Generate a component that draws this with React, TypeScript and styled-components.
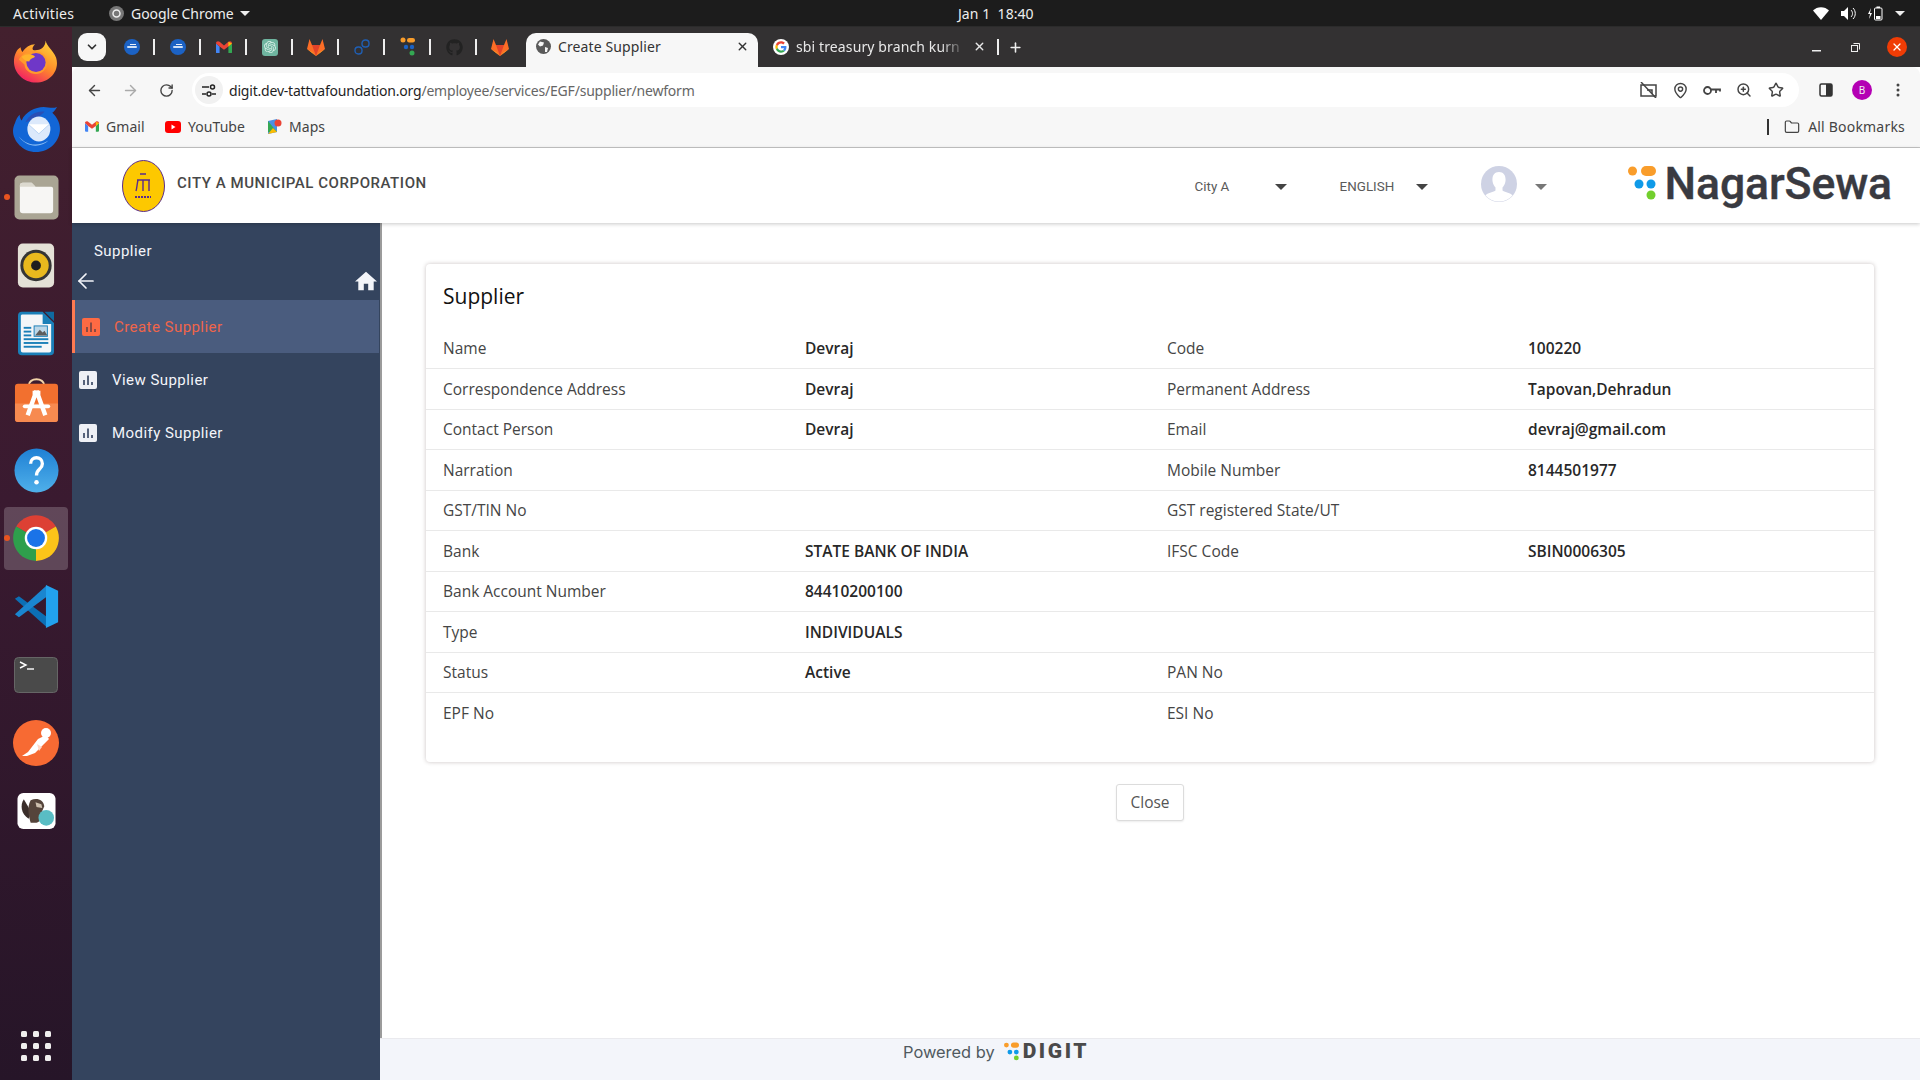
import React from 'react';
import styled, { createGlobalStyle } from 'styled-components';
import { ArrowLeft, ArrowRight, RotateCw, Star, ZoomIn, MapPin, Folder, Plus, X, ChevronDown } from 'lucide-react';
import { FaGithub } from 'react-icons/fa';
import { SiOpenai } from 'react-icons/si';

const Global = createGlobalStyle`
  html, body { margin: 0; padding: 0; background: #fff; }
  * { box-sizing: border-box; }
  #root { width: 1920px; height: 1080px; overflow: hidden; }
`;

const Screen = styled.div`
  width: 1920px; height: 1080px; display: flex; flex-direction: column; overflow: hidden;
  font-family: "Open Sans", sans-serif;
`;
const TopBar = styled.div`
  height: 27px; flex: none; background: #1c1c1c; color: #eee; display: flex; align-items: center;
  font-family: "Noto Sans", sans-serif; font-size: 14px; padding-left: 13px; border-bottom: 1px solid #2b2b2b;
`;
const TopLeft = styled.div`width: 945px; display: flex; align-items: center;`;
const Activities = styled.span`width: 96px; letter-spacing: 0.3px;`;
const AppName = styled.span`margin-left: 7px; letter-spacing: -0.05px;`;
const Caret = styled.span<{ $c?: string; $w?: number }>`
  display: inline-block; width: 0; height: 0; border-style: solid; border-color: ${p => p.$c || '#eee'} transparent transparent;
  border-width: ${p => (p.$w || 5) * 1}px ${p => p.$w || 5}px 0; flex: none;
`;
const Clock = styled.span`white-space: pre; letter-spacing: 0.05px;`;
const Tray = styled.div`margin-left: auto; display: flex; align-items: center; gap: 12px; padding-right: 15px;`;

const Desk = styled.div`flex: 1; min-height: 0; display: flex;`;
const Dock = styled.div`
  width: 72px; flex: none; display: flex; flex-direction: column; padding: 0 0 19px;
  background: linear-gradient(180deg, #43202e 0%, #3a1a30 45%, #261528 100%);
`;
const DockSlot = styled.div<{ $active?: boolean }>`
  height: 68.2px; flex: none; display: flex; align-items: center; justify-content: center; position: relative;
  &::before {
    content: ${p => (p.$active ? '""' : 'none')}; position: absolute; inset: 3px 4px 3px 4px; border-radius: 4px; background: rgba(255,255,255,.2);
  }
  svg { position: relative; }
`;
const RunDot = styled.i`position: absolute; left: 4px; top: 50%; width: 6px; height: 6px; margin-top: -3px; border-radius: 50%; background: #e95420; z-index: 1;`;
const AppsGrid = styled.div`
  margin-top: auto; align-self: center; display: grid; grid-template-columns: repeat(3, 6px); grid-auto-rows: 6px; gap: 6px;
`;
const AppsDot = styled.i`background: #f0eeee; border-radius: 1.5px;`;

const Browser = styled.div`flex: 1; min-width: 0; display: flex; flex-direction: column;`;
const TabStrip = styled.div`
  height: 40px; flex: none; background: #333132; display: flex; align-items: flex-end; padding-left: 6px; color: #e8e8e8;
  font-family: "Noto Sans", sans-serif; font-size: 14px;
`;
const TabMenu = styled.div`
  width: 28px; height: 28px; margin: 0 3px 6px 0; border-radius: 9px; background: #f7f7f7; color: #333; display: flex; align-items: center; justify-content: center;
`;
const PinTab = styled.div<{ $sep?: boolean }>`
  width: 46px; height: 34px; display: flex; align-items: center; justify-content: center; position: relative; padding-bottom: 6px;
  &::after { content: ${p => (p.$sep ? '""' : 'none')}; position: absolute; right: 0; top: 6px; width: 2px; height: 16px; background: #eee; }
`;
const OpenAiChip = styled.div`
  width: 16px; height: 17px; border-radius: 3px; background: #6fb5a0; color: #d8efe7; display: flex; align-items: center; justify-content: center;
`;
const ActiveTab = styled.div`
  width: 232px; height: 34px; margin-left: 3px; background: #f7f7f7; color: #333; border-radius: 10px 10px 0 0;
  display: flex; align-items: center; padding: 0 9px 7px 10px; position: relative;
`;
const TabTitle = styled.span<{ $fade?: boolean }>`
  margin-left: 7px; flex: 1; white-space: nowrap; letter-spacing: 0.12px;
  ${p => p.$fade ? 'mask-image: linear-gradient(90deg, #000 85%, transparent 100%);' : ''}
`;
const BackTab = styled.div`
  width: 241px; height: 34px; display: flex; align-items: center; padding: 0 10px 7px 15px; position: relative;
  &::after { content: ""; position: absolute; right: 0; top: 6px; width: 2px; height: 16px; background: #eee; }
`;
const NewTab = styled.div`margin-left: 9px; height: 34px; display: flex; align-items: center; padding-bottom: 6px; color: #eee;`;
const WinControls = styled.div`margin-left: auto; height: 40px; display: flex; align-items: center; padding-right: 13px; color: #eee;`;
const WinBtn = styled.div`width: 39px; display: flex; justify-content: center; align-items: center;`;
const WinClose = styled.div`width: 20px; height: 20px; margin-left: 12px; border-radius: 50%; background: #f03c05; color: #fff; display: flex; justify-content: center; align-items: center;`;

const Toolbar = styled.div`
  height: 40px; flex: none; background: #f7f7f7; display: flex; padding: 6px 4px 0; color: #444; border-radius: 8px 8px 0 0;
`;
const ToolBtn = styled.div<{ $dim?: boolean; $gap?: number }>`
  width: 36px; height: 34px; display: flex; align-items: center; justify-content: center; flex: none;
  color: ${p => (p.$dim ? '#aaa' : '#444')}; margin-left: ${p => p.$gap || 0}px;
`;
const Omnibox = styled.div`
  width: 1607px; height: 34px; margin-left: 8px; background: #fff; border-radius: 17px; display: flex; align-items: center; padding: 0 7px 0 3px; flex: none;
`;
const SiteChip = styled.div`width: 28px; height: 28px; border-radius: 50%; background: #f1f1f1; display: flex; align-items: center; justify-content: center;`;
const Url = styled.div`margin-left: 6px; font-family: "Noto Sans", sans-serif; font-size: 14px; color: #666; letter-spacing: -0.2px; white-space: nowrap;`;
const UrlHost = styled.span`color: #1f1f1f;`;
const OmniIcons = styled.div`margin-left: auto; display: flex;`;
const OmniIcon = styled.div`width: 32px; display: flex; justify-content: center; align-items: center; color: #444;`;
const Avatar = styled.div`width: 20px; height: 20px; border-radius: 50%; background: #b400b4; color: #f0f0f0; font: 10px "Noto Sans", sans-serif; display: flex; align-items: center; justify-content: center;`;

const Bookmarks = styled.div`
  height: 41px; flex: none; background: #f7f7f7; border-bottom: 1px solid #c6c6c6; display: flex; align-items: center; padding: 0 15px 1px 13px; color: #444;
  font-family: "Noto Sans", sans-serif; font-size: 14px;
`;
const Mark = styled.div<{ $w: number }>`width: ${p => p.$w}px; display: flex; align-items: center; gap: 7px; letter-spacing: 0.05px;`;
const MarkSep = styled.div`width: 2px; height: 16px; background: #333; margin-left: auto;`;
const AllMarks = styled.div`display: flex; align-items: center; gap: 8px; margin-left: 15px; letter-spacing: 0.2px; color: #444;`;

const AppHeader = styled.div`
  height: 75px; flex: none; background: #fff; display: flex; align-items: center; padding: 0 28px 0 50px; position: relative; z-index: 2;
  box-shadow: 0 1px 4px rgba(0,0,0,.22); font-family: Roboto, sans-serif;
`;
const CityTitle = styled.div`margin-left: 12px; margin-bottom: 5px; font-size: 15px; font-weight: 500; color: #484848; letter-spacing: 0.56px;`;
const HeaderSelect = styled.div<{ $w: number; $gap?: number }>`
  width: ${p => p.$w}px; margin-left: ${p => p.$gap || 0}px; display: flex; align-items: center; justify-content: space-between; font-size: 13.4px; color: #5a5a5a; padding-top: 2px;
`;
const UserBlock = styled.div`display: flex; align-items: center; gap: 18px; margin-left: 53px; margin-bottom: 3px;`;
const BrandDots = styled.div`margin-left: 81px; margin-bottom: 5px; flex: none; display: flex;`;
const BrandName = styled.div`margin-left: 9px; font-size: 44.5px; font-weight: 500; color: #393a41; line-height: 1; letter-spacing: -0.1px; margin-bottom: 3px; -webkit-text-stroke: .4px #393a41;`;
const Spacer = styled.div`flex: 1;`;

const AppBody = styled.div`flex: 1; min-height: 0; display: flex;`;
const Sidebar = styled.div`
  width: 310px; flex: none; background: #34445e; border-right: 2px solid #9b9b9b; color: #f3f5fa; font-family: Roboto, sans-serif; font-size: 15px; letter-spacing: .45px;
`;
const SideTitle = styled.div`height: 46px; padding: 18px 0 0 22px; line-height: 20px;`;
const SideNav = styled.div`height: 31px; display: flex; justify-content: space-between; align-items: flex-start; padding: 0 3px 0 2px;`;
const SideItem = styled.div<{ $active?: boolean }>`
  height: 52.9px; display: flex; align-items: center; width: 307px; padding: 1px 0 0 7px; gap: 15px;
  ${p => p.$active ? 'background: #4a5c7e; color: #f0654a; border-left: 3px solid #fe7a51; gap: 14px;' : ''}
`;
const Main = styled.div`flex: 1; min-width: 0; display: flex; flex-direction: column; background: #fff;`;
const Content = styled.div`flex: 1; padding: 41px 46px 0 44px; display: flex; flex-direction: column; align-items: center;`;
const Card = styled.div`
  width: 100%; height: 498px; background: #fff; border-radius: 4px; box-shadow: 0 0 4px rgba(60,40,40,.28); padding-top: 14px; overflow: hidden;
`;
const CardTitle = styled.div`height: 50.8px; padding-left: 17px; font-size: 21px; line-height: 36px; color: #111;`;
const Row = styled.div<{ $last?: boolean }>`
  height: 40.5px; display: grid; grid-template-columns: 362px 362px 361px 1fr; align-items: center; padding: 0 0 1px 17px; font-size: 15.5px; color: #454545;
  border-bottom: ${p => (p.$last ? 'none' : '1px solid #e9e9e9')};
`;
const Value = styled.div`font-weight: 600; color: #282828;`;
const CloseBtn = styled.div`
  margin-top: 21.5px; width: 68px; height: 37.5px; background: #fff; border: 1px solid #dcdcdc; border-radius: 3px; box-shadow: 0 1px 2px rgba(0,0,0,.08);
  display: flex; align-items: center; justify-content: center; font-size: 15.5px; color: #555;
`;
const Footer = styled.div`
  height: 42px; flex: none; background: #f3f5fa; border-top: 1px solid #eaeaee; margin-left: -2px; display: flex; padding: 1px 0 0 523px; align-items: flex-start; color: #505a5f;
`;
const Powered = styled.div`font: 16.4px/24px Inter, sans-serif;`;
const DigitDots = styled.div`margin: 2px 0 0 9px; flex: none; display: flex;`;
const DigitName = styled.div`font: 900 21px/20px Roboto, sans-serif; letter-spacing: 2.6px; color: #4a4a4a; margin: 1px 0 0 4px;`;

const ChromeLogo = ({ s = 56 }: { s?: number }) => (
  <svg width={s} height={s} viewBox="0 0 24 24">
    <path d="M2.5 6.5A11 11 0 0 1 21.5 6.5L12 12z" fill="#dd4034" />
    <path d="M21.5 6.5A11 11 0 0 1 12 23L12 12z" fill="#fcc419" />
    <path d="M12 23A11 11 0 0 1 2.5 6.5L12 12z" fill="#2e9f4c" />
    <circle cx="12" cy="12" r="5.4" fill="#fff" />
    <circle cx="12" cy="12" r="4.3" fill="#1a73e8" />
  </svg>
);
const Firefox = () => (
  <svg width="46" height="47" viewBox="0 0 48 48">
    <defs>
      <linearGradient id="ff1" x1="0.8" y1="0" x2="0.2" y2="1"><stop offset="0" stopColor="#ffd43a" /><stop offset=".5" stopColor="#ff8a2a" /><stop offset="1" stopColor="#f0146a" /></linearGradient>
    </defs>
    <path d="M34 2c1 6 8 10 11 18 4 13-6 26-21 26C11 46 1 36 1 24c0-7 3-13 7-15 0 2 1 4 2 5 3-5 8-8 13-8-3 3-3 5-2 6 6 1 13-2 13-10z" fill="url(#ff1)" />
    <path d="M6 22c3-5 8-9 16-9 8 0 14 6 14 12 0 7-6 12-12 12-7 0-12-5-12-10l-6-5z" fill="#ff9a2c" />
    <circle cx="24" cy="25" r="10" fill="#6f37c8" />
    <path d="M9 19c5-4 12-3 14 0-3 2-5 2-6 5-3 0-6-2-8-5z" fill="#ffb32b" />
  </svg>
);
const Thunderbird = () => (
  <svg width="48" height="46" viewBox="0 0 50 48">
    <path d="M3 18c1-4 3-7 5-9 0 3 1 5 2 6C14 6 24 1 33 1c5 0 9 2 14 0-2 3-3 5-5 6 5 5 8 10 8 17 0 13-11 24-25 24S1 36 1 26c0-3 1-6 2-8z" fill="#1266d6" />
    <path d="M14 17c4-8 12-12 20-11l-7 6z" fill="#2a4fb5" />
    <ellipse cx="28" cy="24" rx="12" ry="13" fill="#dce9fb" />
    <path d="M17 19l11 10 11-10" fill="#fff" stroke="#b8d3f4" strokeWidth="1" />
    <path d="M6 30c6 10 20 14 32 6-8 8-24 8-32-6z" fill="#8fc0f5" />
  </svg>
);
const Files = () => (
  <svg width="45" height="45" viewBox="0 0 46 46">
    <rect width="45" height="45" x=".5" y=".5" rx="5" fill="#aaa594" />
    <path d="M6 11a3 3 0 0 1 3-3h9l4 4h16a2 2 0 0 1 2 2v22a3 3 0 0 1-3 3H9a3 3 0 0 1-3-3z" fill="#f7f6f4" />
    <path d="M6 11a3 3 0 0 1 3-3h9l4 4H6z" fill="#dcd9cf" />
  </svg>
);
const Rhythmbox = () => (
  <svg width="38" height="45" viewBox="0 0 38 46">
    <rect width="37" height="45" x=".5" y=".5" rx="5" fill="#e4e1d7" />
    <circle cx="19" cy="23" r="16" fill="#353535" />
    <circle cx="19" cy="23" r="13" fill="#e9b91e" />
    <circle cx="19" cy="23" r="5" fill="#1f1f1f" />
  </svg>
);
const Writer = () => (
  <svg width="36" height="45" viewBox="0 0 38 46">
    <path d="M4 0h22l12 12v30a4 4 0 0 1-4 4H4a4 4 0 0 1-4-4V4a4 4 0 0 1 4-4z" fill="#1a7fb8" />
    <path d="M4 3h22v10h9v28a2 2 0 0 1-2 2H5a2 2 0 0 1-2-2V4z" fill="#f4f6f8" />
    <path d="M28 0l10 10V0z" fill="#0f6aa1" />
    <rect x="6" y="16" width="8" height="2" fill="#1a7fb8" /><rect x="6" y="20" width="8" height="2" fill="#1a7fb8" /><rect x="6" y="24" width="8" height="2" fill="#1a7fb8" />
    <rect x="17" y="15" width="14" height="11" fill="#bcd7e8" stroke="#1a7fb8" />
    <path d="M18 25l5-6 3 3 2-2 3 5z" fill="#5d5d5d" />
    <rect x="6" y="28" width="26" height="2" fill="#1a7fb8" /><rect x="6" y="32" width="26" height="2" fill="#1a7fb8" /><rect x="6" y="36" width="19" height="2" fill="#1a7fb8" />
  </svg>
);
const AppStore = () => (
  <svg width="45" height="45" viewBox="0 0 46 46" style={{ marginTop: -3 }}>
    <path d="M15 8c0-9 16-9 16 0" fill="none" stroke="#f1d3a8" strokeWidth="2" />
    <path d="M4 6h38a3 3 0 0 1 3 3v33a3 3 0 0 1-3 3H4a3 3 0 0 1-3-3V9a3 3 0 0 1 3-3z" fill="#f2702f" />
    <path d="M1 26h44v16a3 3 0 0 1-3 3H4a3 3 0 0 1-3-3z" fill="#f78a50" />
    <path d="M23 13l-9 25M23 13l9 25" stroke="#fff" strokeWidth="4.5" fill="none" />
    <rect x="9" y="27" width="28" height="4" rx="2" fill="#fff" />
    <rect x="19" y="13" width="8" height="4" fill="#fff" />
  </svg>
);
const Help = () => (
  <svg width="45" height="45" viewBox="0 0 46 46">
    <defs><linearGradient id="hp" x1="0" y1="0" x2="0" y2="1"><stop offset="0" stopColor="#1f80d4" /><stop offset="1" stopColor="#4fb0ea" /></linearGradient></defs>
    <circle cx="23" cy="23" r="22.5" fill="url(#hp)" />
    <path d="M17 16c0-8 12-8 12 0 0 6-6 5-6 12" fill="none" stroke="#fff" strokeWidth="3.4" />
    <circle cx="23" cy="35" r="2.3" fill="#fff" />
  </svg>
);
const VSCode = () => (
  <svg width="45" height="45" viewBox="0 0 100 100">
    <path d="M2 33l9-6 63 47-1 22z" fill="#0c6fb5" />
    <path d="M2 67l9 7 63-47-1-24z" fill="#1a86d0" />
    <path d="M71 2l27 13v70L71 98z" fill="#22a2ee" />
  </svg>
);
const Terminal = () => (
  <svg width="44" height="36" viewBox="0 0 44 36">
    <rect width="43" height="35" x=".5" y=".5" rx="4" fill="#4a4a4a" stroke="#666" />
    <path d="M6 5l6 3-6 3" fill="none" stroke="#fff" strokeWidth="1.4" />
    <path d="M13 12h7" stroke="#fff" strokeWidth="1.4" />
  </svg>
);
const Postman = () => (
  <svg width="46" height="46" viewBox="0 0 46 46">
    <circle cx="23" cy="23" r="23" fill="#f76a33" />
    <path d="M9 36l6-4 10-13 8-4 3 4-5 5-9 9-8 3z" fill="#fff" />
    <circle cx="33" cy="13" r="5" fill="#fff" />
    <path d="M24 24l5 3-3 4z" fill="#ffd9c8" />
  </svg>
);
const DBeaver = () => (
  <svg width="39" height="38" viewBox="0 0 40 38">
    <rect width="39" height="37" x=".5" y=".5" rx="6" fill="#fff" />
    <path d="M7 7c-4 6-3 15 5 20l2-8z" fill="#3a2e2a" />
    <path d="M14 8c6-3 13-1 14 6l-3 7c1 5-1 9-5 10h-6c-2-7-4-16 0-23z" fill="#55443b" />
    <path d="M19 10l6 2 1 4-6-1z" fill="#cdbfae" />
    <circle cx="30" cy="26" r="8" fill="#59bdc4" />
  </svg>
);
const GoogleG = () => (
  <svg width="16" height="16" viewBox="0 0 48 48" style={{ flex: 'none' }}>
    <circle cx="24" cy="24" r="24" fill="#fff" />
    <g transform="translate(7 7) scale(.71)">
      <path fill="#EA4335" d="M24 9.5c3.54 0 6.71 1.22 9.21 3.6l6.85-6.85C35.9 2.38 30.47 0 24 0 14.62 0 6.51 5.38 2.56 13.22l7.98 6.19C12.43 13.72 17.74 9.5 24 9.5z" />
      <path fill="#4285F4" d="M46.98 24.55c0-1.57-.15-3.09-.38-4.55H24v9.02h12.94c-.58 2.96-2.26 5.48-4.78 7.18l7.73 6c4.51-4.18 7.09-10.36 7.09-17.65z" />
      <path fill="#FBBC05" d="M10.53 28.59c-.48-1.45-.76-2.99-.76-4.59s.27-3.14.76-4.59l-7.98-6.19C.92 16.46 0 20.12 0 24c0 3.88.92 7.54 2.56 10.78l7.97-6.19z" />
      <path fill="#34A853" d="M24 48c6.48 0 11.93-2.13 15.89-5.81l-7.73-6c-2.15 1.45-4.92 2.3-8.16 2.3-6.26 0-11.57-4.22-13.47-9.91l-7.98 6.19C6.51 42.62 14.62 48 24 48z" />
    </g>
  </svg>
);
const Gmail = ({ s = 16 }: { s?: number }) => (
  <svg width={s} height={s * 0.8} viewBox="0 0 20 16">
    <path d="M0 3v11a1.5 1.5 0 0 0 1.5 1.5H4.5V7z" fill="#4285f4" />
    <path d="M20 3v11a1.5 1.5 0 0 1-1.5 1.5H15.5V7z" fill="#34a853" />
    <path d="M0 3c0-2.5 2.5-3.5 4.5-2L10 5.5 15.5 1c2-1.5 4.5-.5 4.5 2l-4.5 4L10 11 4.500 7z" fill="#ea4335" />
    <path d="M15.500 1L20 3l-4.500 4z" fill="#fbbc04" />
  </svg>
);
const Gitlab = () => (
  <svg width="18" height="17" viewBox="0 0 18 17">
    <path d="M9 17L0 10 2.500 0 5 6h8l2.500-6L18 10z" fill="#fc6d26" />
    <path d="M9 17L5 6h8z" fill="#e24329" />
    <path d="M0 10l9 7-4-4z" fill="#fca326" /><path d="M18 10l-9 7 4-4z" fill="#fca326" />
  </svg>
);
const Orb = () => (
  <svg width="16" height="16" viewBox="0 0 16 16">
    <circle cx="8" cy="8" r="8" fill="#1c62c4" />
    <rect x="3" y="7" width="10" height="2" rx="1" fill="#cfe0f6" />
    <rect x="6" y="5" width="6" height="1" fill="#eaf1fb" />
  </svg>
);
const Chain = () => (
  <svg width="16" height="16" viewBox="0 0 16 16" fill="none" stroke="#1f5fb5" strokeWidth="1.4">
    <rect x="8" y="1" width="7" height="7" rx="3.2" /><rect x="1" y="8" width="7" height="7" rx="3.2" />
  </svg>
);
const BrandMark = ({ w, h }: { w: number; h: number }) => (
  <svg width={w} height={h} viewBox="0 0 28 34">
    <circle cx="4.500" cy="5" r="4.500" fill="#f99d2b" />
    <rect x="13" y="0" width="15" height="10" rx="5" fill="#f99d2b" />
    <circle cx="11" cy="18" r="4.500" fill="#0f9ae8" />
    <circle cx="23" cy="18" r="4.500" fill="#0f9ae8" />
    <circle cx="23" cy="29" r="4.500" fill="#72cf2d" />
  </svg>
);
const BarChip = ({ bg, fg }: { bg: string; fg: string }) => (
  <svg width="18" height="18" viewBox="0 0 18 18" style={{ flex: 'none' }}>
    <rect width="18" height="18" rx="2" fill={bg} />
    <rect x="4" y="9" width="2" height="5" fill={fg} /><rect x="8" y="4.500" width="2" height="9.500" fill={fg} /><rect x="12" y="11" width="2" height="3" fill={fg} />
  </svg>
);

const rows: [string, string, string, string][] = [
  ['Name', 'Devraj', 'Code', '100220'],
  ['Correspondence Address', 'Devraj', 'Permanent Address', 'Tapovan,Dehradun'],
  ['Contact Person', 'Devraj', 'Email', 'devraj@gmail.com'],
  ['Narration', '', 'Mobile Number', '8144501977'],
  ['GST/TIN No', '', 'GST registered State/UT', ''],
  ['Bank', 'STATE BANK OF INDIA', 'IFSC Code', 'SBIN0006305'],
  ['Bank Account Number', '84410200100', '', ''],
  ['Type', 'INDIVIDUALS', '', ''],
  ['Status', 'Active', 'PAN No', ''],
  ['EPF No', '', 'ESI No', ''],
];

const pins: React.ReactNode[] = [
  <Orb />, <Orb />, <Gmail />,
  <OpenAiChip><SiOpenai size={12} /></OpenAiChip>,
  <Gitlab />, <Chain />,
  <svg width="16" height="20" viewBox="0 0 16 20"><circle cx="3" cy="3" r="2.500" fill="#f99d2b" /><rect x="7" y="1" width="8" height="4.500" rx="2.200" fill="#f99d2b" /><circle cx="6" cy="10" r="2.200" fill="#1c62c4" /><circle cx="12" cy="10" r="2.200" fill="#1c62c4" /><circle cx="12" cy="16" r="2.500" fill="#34a853" /></svg>,
  <FaGithub size={17} color="#222" />,
  <Gitlab />,
];

export default function App() {
  return (
    <Screen>
      <Global />
      <TopBar>
        <TopLeft>
          <Activities>Activities</Activities>
          <svg width="15" height="15" viewBox="0 0 15 15"><circle cx="7.500" cy="7.500" r="7.500" fill="#777" /><circle cx="7.500" cy="7.500" r="3.500" fill="none" stroke="#eee" strokeWidth="1.500" /></svg>
          <AppName>Google Chrome</AppName>
          <Caret style={{ marginLeft: 6 }} $w={5} />
        </TopLeft>
        <Clock>Jan 1  18:40</Clock>
        <Tray>
          <svg width="16" height="13" viewBox="0 0 16 13"><path d="M0 3.500C4-1 12-1 16 3.500L8 13z" fill="#fff" /></svg>
          <svg width="15" height="13" viewBox="0 0 15 13"><path d="M0 4h3l4-4v13L3 9H0z" fill="#fff" /><path d="M10 3c2 2 2 5 0 7M12 1c3 3 3 8 0 11" stroke="#fff" fill="none" /></svg>
          <svg width="15" height="15" viewBox="0 0 15 15"><path d="M3 2L0 8h2l-1 5 3-6H2z" fill="#fff" /><rect x="6.500" y="2" width="7.500" height="12" rx="1" fill="none" stroke="#fff" /><rect x="8.500" y="0.500" width="3.500" height="1.500" fill="#fff" /><rect x="8" y="10" width="4.500" height="3" fill="#fff" /></svg>
          <Caret />
        </Tray>
      </TopBar>
      <Desk>
        <Dock>
          <DockSlot><Firefox /></DockSlot>
          <DockSlot><Thunderbird /></DockSlot>
          <DockSlot><RunDot /><Files /></DockSlot>
          <DockSlot><Rhythmbox /></DockSlot>
          <DockSlot><Writer /></DockSlot>
          <DockSlot><AppStore /></DockSlot>
          <DockSlot><Help /></DockSlot>
          <DockSlot $active><RunDot /><ChromeLogo s={50} /></DockSlot>
          <DockSlot><VSCode /></DockSlot>
          <DockSlot><Terminal /></DockSlot>
          <DockSlot><Postman /></DockSlot>
          <DockSlot><DBeaver /></DockSlot>
          <AppsGrid>{Array.from({ length: 9 }).map((_, i) => <AppsDot key={i} />)}</AppsGrid>
        </Dock>
        <Browser>
          <TabStrip>
            <TabMenu><ChevronDown size={14} strokeWidth={3} /></TabMenu>
            {pins.map((p, i) => <PinTab key={i} $sep={i < 8}>{p}</PinTab>)}
            <ActiveTab>
              <svg width="15" height="15" viewBox="0 0 15 15" style={{ flex: 'none' }}>
                <circle cx="7.500" cy="7.500" r="7.500" fill="#5a5a5a" />
                <path d="M4 2.500l4 1-1 3-3 1-2-2zM9 8l3 1-1 4-2 0z" fill="#f7f7f7" />
              </svg>
              <TabTitle>Create Supplier</TabTitle>
              <X size={13} strokeWidth={2.500} />
            </ActiveTab>
            <BackTab>
              <GoogleG />
              <TabTitle $fade>sbi treasury branch kurn</TabTitle>
              <X size={13} strokeWidth={2.500} style={{ marginRight: 3, marginLeft: 7 }} />
            </BackTab>
            <NewTab><Plus size={15} strokeWidth={2.500} /></NewTab>
            <WinControls>
              <WinBtn><svg width="9" height="9" viewBox="0 0 9 9"><rect y="7" width="9" height="1.500" fill="#eee" /></svg></WinBtn>
              <WinBtn><svg width="9" height="9" viewBox="0 0 9 9" fill="none" stroke="#eee"><rect x=".5" y="2.500" width="6" height="6" /><path d="M2.500 .5h6v6" /></svg></WinBtn>
              <WinClose><X size={12} strokeWidth={2.500} /></WinClose>
            </WinControls>
          </TabStrip>
          <Toolbar>
            <ToolBtn><ArrowLeft size={17} strokeWidth={2} /></ToolBtn>
            <ToolBtn $dim><ArrowRight size={17} strokeWidth={2} /></ToolBtn>
            <ToolBtn><RotateCw size={15} strokeWidth={2.200} /></ToolBtn>
            <Omnibox>
              <SiteChip>
                <svg width="14" height="13" viewBox="0 0 14 13" fill="none" stroke="#222" strokeWidth="1.500"><path d="M0 3h7M0 10h4" /><circle cx="10.500" cy="3" r="2" /><circle cx="7" cy="10" r="2" /><path d="M10 10h4" /></svg>
              </SiteChip>
              <Url><UrlHost>digit.dev-tattvafoundation.org</UrlHost>/employee/services/EGF/supplier/newform</Url>
              <OmniIcons>
                <OmniIcon><svg width="17" height="16" viewBox="0 0 17 16" fill="none" stroke="#444" strokeWidth="1.500"><rect x="1" y="3" width="15" height="11" /><path d="M7 8h5v4" /><path d="M1 0l15 16" /></svg></OmniIcon>
                <OmniIcon><MapPin size={17} strokeWidth={2} /></OmniIcon>
                <OmniIcon><svg width="18" height="11" viewBox="0 0 18 11" fill="none" stroke="#444" strokeWidth="1.800"><circle cx="4.500" cy="5.500" r="3.500" /><path d="M8 4.500h9v2M13 5v3" /></svg></OmniIcon>
                <OmniIcon><ZoomIn size={16} strokeWidth={2.200} /></OmniIcon>
                <OmniIcon><Star size={16} strokeWidth={2.200} /></OmniIcon>
              </OmniIcons>
            </Omnibox>
            <ToolBtn $gap={9}>
              <svg width="14" height="14" viewBox="0 0 14 14"><rect x="1" y="1" width="12" height="12" rx="1.500" fill="none" stroke="#333" strokeWidth="1.500" /><rect x="7" y="1" width="6" height="12" fill="#333" /></svg>
            </ToolBtn>
            <ToolBtn><Avatar>B</Avatar></ToolBtn>
            <ToolBtn>
              <svg width="4" height="14" viewBox="0 0 4 14" fill="#444"><circle cx="2" cy="2" r="1.500" /><circle cx="2" cy="7" r="1.500" /><circle cx="2" cy="12" r="1.500" /></svg>
            </ToolBtn>
          </Toolbar>
          <Bookmarks>
            <Mark $w={80}><Gmail s={14} />Gmail</Mark>
            <Mark $w={103}><svg width="16" height="12" viewBox="0 0 16 12"><rect width="16" height="12" rx="3" fill="#f00" /><path d="M6.500 3.500v5l4-2.500z" fill="#fff" /></svg>YouTube</Mark>
            <Mark $w={70}><svg width="14" height="15" viewBox="0 0 14 15"><path d="M0 2l9-2v13l-9 2z" fill="#4a90e2" /><path d="M0 2l9 11H0z" fill="#34a853" /><path d="M0 15l5-6 4 4z" fill="#fbbc04" /><circle cx="10" cy="4" r="3.500" fill="#ea4335" /></svg>Maps</Mark>
            <MarkSep />
            <AllMarks><Folder size={16} strokeWidth={1.800} />All Bookmarks</AllMarks>
          </Bookmarks>
          <AppHeader>
            <svg width="43" height="52" viewBox="0 0 43 52" style={{ flex: 'none' }}>
              <ellipse cx="21.500" cy="26" rx="21" ry="25.500" fill="#fdc800" stroke="#5a2c8a" />
              <path d="M18 14h6M15 20h13M16 20c-1 4-1 8-2 11M21 20v11M27 20v11" stroke="#5a2c8a" strokeWidth="1.400" fill="none" />
              <path d="M13 37h16" stroke="#5a2c8a" strokeWidth="2" strokeDasharray="2 1" />
            </svg>
            <CityTitle>CITY A MUNICIPAL CORPORATION</CityTitle>
            <Spacer />
            <HeaderSelect $w={92}>City A<Caret $c="#444" $w={6} /></HeaderSelect>
            <HeaderSelect $w={88} $gap={53}>ENGLISH<Caret $c="#444" $w={6} /></HeaderSelect>
            <UserBlock>
              <svg width="36" height="36" viewBox="0 0 36 36">
                <circle cx="18" cy="18" r="18" fill="#ced2e4" />
                <path d="M18 6c5 0 7 4 6.500 9-.3 3-2 5.500-3 6.500v3c3 2 8 2 10 5a18 18 0 0 1-27 0c2-3 7-3 10-5v-3c-1-1-2.700-3.500-3-6.500C11 10 13 6 18 6z" fill="#fff" />
              </svg>
              <Caret $c="#777" $w={6} style={{ marginTop: 6 }} />
            </UserBlock>
            <BrandDots><BrandMark w={28} h={34} /></BrandDots>
            <BrandName>NagarSewa</BrandName>
          </AppHeader>
          <AppBody>
            <Sidebar>
              <SideTitle>Supplier</SideTitle>
              <SideNav>
                <ArrowLeft size={24} strokeWidth={1.700} />
                <svg width="22" height="20" viewBox="2 3 20 17" style={{ marginTop: 2 }}><path d="M10 20v-6h4v6h5v-8h3L12 3 2 12h3v8z" fill="#f3f5fa" /></svg>
              </SideNav>
              <div>
                <SideItem $active><BarChip bg="#fe6a43" fg="#8a4a42" />Create Supplier</SideItem>
                <SideItem><BarChip bg="#eef0f5" fg="#56627a" />View Supplier</SideItem>
                <SideItem><BarChip bg="#eef0f5" fg="#56627a" />Modify Supplier</SideItem>
              </div>
            </Sidebar>
            <Main>
              <Content>
                <Card>
                  <CardTitle>Supplier</CardTitle>
                  {rows.map((r, i) => (
                    <Row key={i} $last={i === rows.length - 1}>
                      <div>{r[0]}</div><Value>{r[1]}</Value><div>{r[2]}</div><Value>{r[3]}</Value>
                    </Row>
                  ))}
                </Card>
                <CloseBtn>Close</CloseBtn>
              </Content>
              <Footer>
                <Powered>Powered by</Powered>
                <DigitDots><BrandMark w={15} h={19} /></DigitDots>
                <DigitName>DIGIT</DigitName>
              </Footer>
            </Main>
          </AppBody>
        </Browser>
      </Desk>
    </Screen>
  );
}
